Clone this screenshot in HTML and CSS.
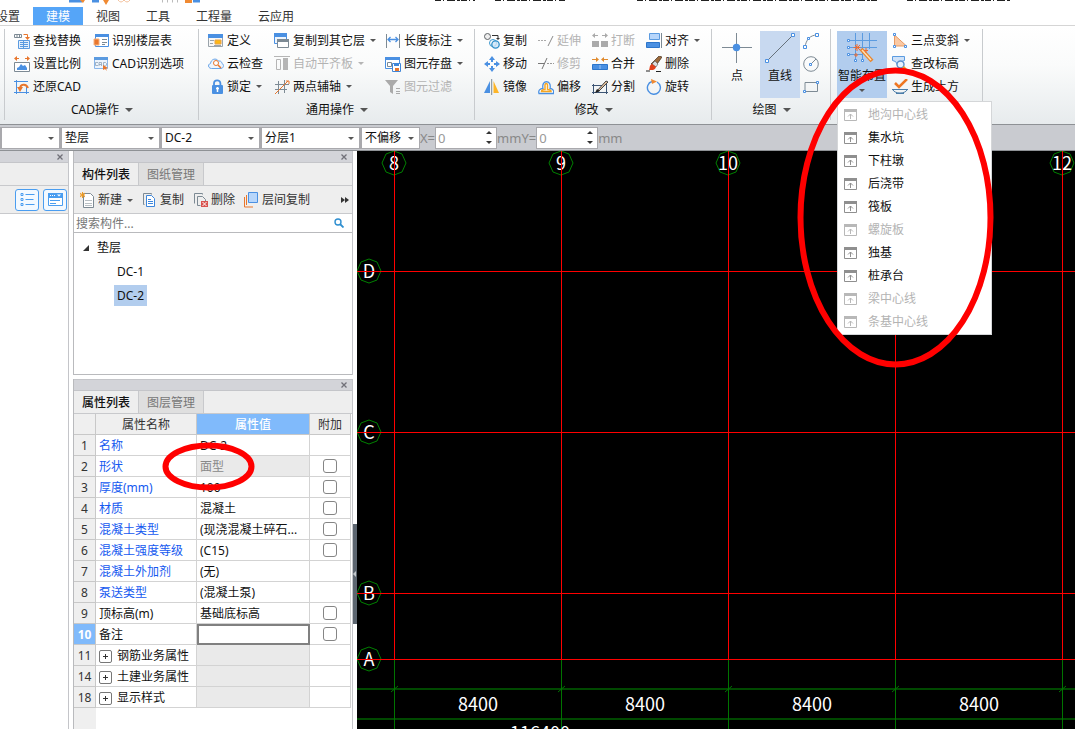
FILE: index.html
```html
<!DOCTYPE html>
<html lang="zh-CN">
<head>
<meta charset="utf-8">
<title>建模</title>
<link rel="stylesheet" href="styles.css">
</head>
<body>
<svg class="sprite" aria-hidden="true">
  <symbol id="find" viewBox="0 0 16 16"><path d="M.5 1.500h7v3h-7zM3 1.500v3M5.500 1.500v3" fill="none" stroke="#7d8a94"/><path d="M9.500 1.500h4v3" fill="none" stroke="#e8762d"/><path d="M11 4h5l-2.500 3z" fill="#e8762d"/><path d="M4.500 7.500h11v8h-11z" fill="#e4effb" stroke="#5b9be0"/><path d="M6 9.500h8M6 11.500h8M6 13.500h8M9.500 8v7" stroke="#5b9be0"/></symbol>
  <symbol id="scale" viewBox="0 0 16 16"><path d="M1 2.500h4M11 2.500h4" stroke="#e8762d"/><path d="M3 0v5L0 2.500zM13 0v5l3-2.500z" fill="#e8762d"/><path d="M.5 6.500h15v9H.5z" fill="#fff" stroke="#7d8a94"/><path d="M3 14v-2l2-1 2-3 2 2 2-1 2 3v2z" fill="#4a90e2"/></symbol>
  <symbol id="restore" viewBox="0 0 16 16"><path d="M2.500 1v14M12.500 6v9M0 2.500h14M0 13.500h15" stroke="#4a90e2" fill="none"/><path d="M6 10c0-5 6-6 8-1" stroke="#e8762d" stroke-width="2" fill="none"/><path d="M3 8h6l-3 5z" fill="#e8762d"/></symbol>
  <symbol id="floors" viewBox="0 0 16 16"><path d="M2.500 1.500h13v12h-13z" fill="#fff" stroke="#4a90e2"/><path d="M2 1h14v3H2z" fill="#4a90e2"/><path d="M9 6.500h5M9 9.500h5M9 11.500h3" stroke="#7d8a94"/><path d="M1 6h5v6H1z" fill="#e8762d" stroke="#f6b07d"/></symbol>
  <symbol id="cadopt" viewBox="0 0 16 16"><path d="M1.500 1.500h13v11h-13z" fill="#edf4fc" stroke="#8bb7ea"/><path d="M1 1h14v3H1z" fill="#5b9be0"/><path d="M5 6.500H2.500v3H5M6 10V6.500h2.500V10M6 8.500h2.500M10.500 6.500h2l1 1v1.500l-1 1h-2z" fill="none" stroke="#8ea3b8" stroke-width=".8"/><path d="M10 9l5 3-2 .5L14 15l-2-2-2 1z" fill="#e8762d"/></symbol>
  <symbol id="define" viewBox="0 0 16 16"><path d="M.5 1.500h14v12H.5z" fill="#f7f7f7" stroke="#9aa3aa"/><path d="M0 1h15v4H0z" fill="#4a90e2"/><path d="M2 7.500h4M2 10.500h3M6 12.500h7" stroke="#9aa3aa"/><path d="M7 7h6v4H7z" fill="#fdb813" stroke="#e8a24a"/></symbol>
  <symbol id="cloud" viewBox="0 0 16 16"><path d="M3.500 12.500C0 12.500-.5 8 2.500 7.500 3 3 8 1.500 10.500 5c3-.5 3.500 2 3.500 2.500 2.500 1 1.500 5-1 5z" fill="#eef5fd" stroke="#6aa5e8"/><circle cx="8" cy="7" r="2.500" fill="#fff" stroke="#e8762d"/><path d="M10 9l3 3" stroke="#e8762d" stroke-width="1.500"/></symbol>
  <symbol id="lock" viewBox="0 0 16 16"><path d="M6 7V4.500a3.200 3.200 0 0 1 6.400 0V7" fill="none" stroke="#4a90e2" stroke-width="1.800"/><rect x="4" y="6" width="11" height="9" rx="1" fill="#4a90e2"/><path d="M9.500 8v5M8 9.500h3" stroke="#fff" stroke-width="1.500"/></symbol>
  <symbol id="copyfloor" viewBox="0 0 16 16"><path d="M.5 .500h12v10H.5z" fill="#edf4fc" stroke="#4a90e2"/><path d="M0 0h13v4H0z" fill="#4a90e2"/><path d="M3.500 6.500h11v8h-11z" fill="#fff" stroke="#7d8a94"/><path d="M3 6h12v3H3z" fill="#7d8a94"/></symbol>
  <symbol id="align-slab" viewBox="0 0 16 16"><path d="M0 .5h16" stroke="#b5b5b5"/><path d="M2.500 3.500h4v10h-4z" fill="none" stroke="#b5b5b5"/><path d="M9 2h5v12H9z" fill="#b5b5b5"/></symbol>
  <symbol id="axis" viewBox="0 0 16 16"><path d="M4.500 2v13M10.500 1v13M1 5.500h14M1 10.500h12" stroke="#7d8a94"/><path d="M1 15L14 2" stroke="#e8762d"/><path d="M12 2h3v3" fill="none" stroke="#e8762d"/></symbol>
  <symbol id="length" viewBox="0 0 16 16"><path d="M1.500 1v14M14.500 1v14" stroke="#7d8a94"/><path d="M3 6.500h10M5.500 4L3 6.500 5.500 9M10.500 4L13 6.500 10.500 9" fill="none" stroke="#4a90e2" stroke-width="1.300"/></symbol>
  <symbol id="save" viewBox="0 0 16 16"><path d="M.5 1.500h14v11H.5z" fill="#fff" stroke="#4a90e2"/><path d="M0 1h15v3H0z" fill="#4a90e2"/><path d="M2.500 6.500h4v4h-4z" fill="none" stroke="#7d8a94"/><path d="M7.500 7.500h8v8h-8z" fill="#fff" stroke="#3f86d8"/><path d="M9 7h5v3H9z" fill="#3f86d8"/><path d="M10 12h4v3h-4z" fill="#e8762d"/></symbol>
  <symbol id="filter" viewBox="0 0 16 16"><path d="M0 1h13L8 7v8l-3-2V7z" fill="#aaa"/><path d="M11 9.500h4M11 12.500h4M11 14.500h4" stroke="#aaa"/></symbol>
  <symbol id="copy" viewBox="0 0 16 16"><circle cx="3.500" cy="3.500" r="3" fill="#eee" stroke="#5e6367"/><path d="M8 2.500h6v3" fill="none" stroke="#333"/><path d="M12 5h4l-2 2z" fill="#333"/><circle cx="9" cy="10" r="3.500" fill="#fff" stroke="#3c98cf"/><circle cx="11.500" cy="11.500" r="3.700" fill="#cfe6f7" fill-opacity=".8" stroke="#2f8fc9" stroke-width="1.300"/></symbol>
  <symbol id="move" viewBox="0 0 16 16"><path d="M8 3v3M8 10v3M3 8h3M10 8h3" stroke="#4a90e2" stroke-width="2"/><path d="M8 0l3 4H5zM8 16l3-4H5zM0 8l4-3v6zM16 8l-4-3v6z" fill="#4a90e2"/></symbol>
  <symbol id="mirror" viewBox="0 0 16 16"><path d="M6 2v12H0z" fill="#4a90e2"/><path d="M9.500 2v12H15z" fill="#fdb528"/><path d="M7.700 0v16" stroke="#7d8a94"/></symbol>
  <symbol id="extend" viewBox="0 0 16 16"><path d="M0 7.500h9" stroke="#aaa" stroke-dasharray="2 1"/><path d="M10 13l5-10" stroke="#8b8b8b"/></symbol>
  <symbol id="trim" viewBox="0 0 16 16"><path d="M0 7.500h6" stroke="#777"/><path d="M9 7.500h7" stroke="#999" stroke-dasharray="2 1"/><path d="M4 13L9 2" stroke="#777"/></symbol>
  <symbol id="offset" viewBox="0 0 16 16"><path d="M1 14.500h14.500c.8-3-1-5-3.500-5 2-9-9-9-7 0-3 0-5 2-4 5z" fill="#fff" stroke="#4a90e2" stroke-width="1.300"/><path d="M3.500 12.500h9.500c0-1.500-1-2-3.500-2V7C10 3.500 6.500 3.500 7 7v3.500c-2.500 0-3.500.5-3.500 2z" fill="none" stroke="#f5a623" stroke-width="1.500"/></symbol>
  <symbol id="break" viewBox="0 0 16 16"><path d="M1 2.500h5M10 2.500h5" stroke="#aaa"/><path d="M0 2.500L3 0v5zM16 2.500L13 0v5z" fill="#aaa"/><path d="M0 8h7v6H0zM9 8h7v6H9z" fill="#aaa"/></symbol>
  <symbol id="merge" viewBox="0 0 16 16"><path d="M0 3.500h5M11 3.500h5" stroke="#e08a2d"/><path d="M7 3.500L4 1v5zM9 3.500L12 1v5z" fill="#e08a2d"/><path d="M.5 8.500h15v5H.5z" fill="#4a90e2" stroke="#2d76cb"/><path d="M8 9v4" stroke="#9cc5f3"/></symbol>
  <symbol id="split" viewBox="0 0 16 16"><path d="M1.500 5v10M14.500 5v10M0 6.500h10M0 13.500h16" fill="none" stroke="#3d5574"/><path d="M4 13l10-11 2 1L7 12z" fill="#e6c29d" stroke="#444"/><path d="M3 14l2-4 3 2z" fill="#222"/></symbol>
  <symbol id="align" viewBox="0 0 16 16"><path d="M3.500.5h10v6h-10z" fill="#b7d6fb" stroke="#5b9be0"/><path d="M.5 9.500h13v5H.5z" fill="#4a90e2" stroke="#2d76cb"/><path d="M15.500 0v15" stroke="#7d8a94"/></symbol>
  <symbol id="brush" viewBox="0 0 16 16"><path d="M13 0l3 1-7 10-4-3z" fill="#9b6a3c" stroke="#46301e" stroke-width=".7"/><path d="M9 5l3 3-2 3-4-3z" fill="#ddd" stroke="#555" stroke-width=".6"/><path d="M6 8l4 3c-1 4-5 3-7 3 1-1 0-5 3-6z" fill="#e2401b"/><path d="M0 15h4M10 15.500h5" stroke="#222"/></symbol>
  <symbol id="rotate" viewBox="0 0 16 16"><path d="M6 2.500a6.500 6.500 0 1 0 5 .5" fill="none" stroke="#4a90e2" stroke-width="1.400"/><path d="M5 0l6 2.500L6 5z" fill="#f08a32"/></symbol>
  <symbol id="point" viewBox="0 0 30 30"><path d="M14.500 0v30M0 14.500h30" stroke="#7d8a94"/><circle cx="14.500" cy="14.500" r="3.700" fill="#4a90e2"/></symbol>
  <symbol id="line" viewBox="0 0 30 30"><path d="M2 28L28 2" stroke="#66717b"/><path d="M.5 26.500h3v3h-3zM26.500.5h3v3h-3z" fill="#fff" stroke="#4a90e2"/></symbol>
  <symbol id="arc" viewBox="0 0 16 16"><path d="M2 14C3 7 7 2 14 2" fill="none" stroke="#7d8a94"/><path d="M.5 12.500h3v3h-3zM12.500.5h3v3h-3zM4.500 4.500h2v2h-2z" fill="#fff" stroke="#4a90e2"/></symbol>
  <symbol id="circle" viewBox="0 0 16 16"><circle cx="8" cy="8" r="7.300" fill="none" stroke="#7d8a94"/><path d="M8 8l5-5" stroke="#7d8a94"/><path d="M6.500 7.500h2v2h-2z" fill="#fff" stroke="#4a90e2"/></symbol>
  <symbol id="rect" viewBox="0 0 16 16"><path d="M2 3.500h12.500v9H2z" fill="none" stroke="#7d8a94"/><path d="M.5 11.500h2v2h-2zM13.500 2.500h2v2h-2z" fill="#fff" stroke="#4a90e2"/></symbol>
  <symbol id="smart" viewBox="0 0 30 30"><path d="M8.500 0v28M15.500 0v28M22.500 0v16M1 7.500h29M1 14.500h29M1 21.500h14" stroke="#5b9be0" fill="none"/><path d="M.5 6.500h2v2h-2zM.5 13.500h2v2h-2zM.5 20.500h2v2h-2zM7.500 26.500h2v2h-2zM14.500 26.500h2v2h-2z" fill="#fff" stroke="#4a90e2"/><path d="M14 16l11 12" stroke="#e8862f" stroke-width="4"/><path d="M15 17l9 10" stroke="#ffe0b4" stroke-width="1.500"/><path d="M10 11v7M6.500 14.500h7M8 12l5 5M13 12l-5 5M19 15v5M17 17.500h4M9 20v4M7 22h4" stroke="#ee6b2f"/></symbol>
  <symbol id="slope" viewBox="0 0 16 16"><path d="M2.500 2v11h12z" fill="#fac9a4" stroke="#e79a64"/><path d="M1.500.5h2v2h-2zM1.500 12.500h2v2h-2zM12.500 12.500h2v2h-2z" fill="#fff" stroke="#4a90e2"/></symbol>
  <symbol id="level" viewBox="0 0 16 16"><path d="M.5.500h12v4l-3 1-3 5-3-5-3-1z" fill="#cfe2f8" stroke="#5b9be0"/><circle cx="8.500" cy="8.500" r="3.500" fill="#e7f2fd" stroke="#5b8fca" stroke-width="1.400"/><path d="M11 11l4 4" stroke="#f09a21" stroke-width="3"/></symbol>
  <symbol id="earth" viewBox="0 0 16 16"><path d="M3 4l4 4 8-8" fill="none" stroke="#ee7622" stroke-width="2.500"/><path d="M0 10.500h16M1 11c2 4 12 4 14 0M4 14.500h8" fill="none" stroke="#4a7ca8"/></symbol>
  <symbol id="win" viewBox="0 0 13 12"><path d="M.5.500h12v11H.5z" fill="#fff" stroke="currentColor"/><path d="M0 0h13v3H0z" fill="currentColor"/><path d="M6.500 5v5M4 7.500L6.500 5 9 7.500" fill="none" stroke="currentColor"/></symbol>
  <symbol id="x" viewBox="0 0 6 6"><path d="M.5.500l5 5M5.500.500l-5 5" stroke="#707078" stroke-width="1.300"/></symbol>
  <symbol id="list" viewBox="0 0 14 14"><path d="M.5.500h2v2h-2zM.5 5.500h2v2h-2zM.5 10.500h2v2h-2z" fill="none" stroke="#4a9df0"/><path d="M5 1.500h9M5 6.500h8M5 11.500h9" stroke="#4a9df0"/></symbol>
  <symbol id="card" viewBox="0 0 15 14"><path d="M.5.500h14v12H.5z" fill="#fff" stroke="#4a9df0"/><path d="M0 0h15v5H0z" fill="#4a9df0"/><path d="M2 2.500h5" stroke="#fff" stroke-dasharray="1 1"/><path d="M9 1.500h4l-2 2z" fill="#fff"/><path d="M2 7.500h10M2 10.500h6" stroke="#4a9df0"/></symbol>
  <symbol id="new" viewBox="0 0 16 16"><path d="M3.500 1.500h7l3 3v11h-10z" fill="#fff" stroke="#7d8a94"/><path d="M5 8.500h7M5 11.500h7M5 13.500h7" stroke="#b9bfc4"/><path d="M0 1l5 4M5 1L0 5M2.500 0v6M0 3h5" stroke="#f09a21"/></symbol>
  <symbol id="pages" viewBox="0 0 16 16"><path d="M2.500 12.500h-1v-11h8v1" fill="none" stroke="#7d8a94"/><path d="M4.500 3.500h5l3 3v8h-8z" fill="#fff" stroke="#3d86dc"/><path d="M6 7.500h3M6 9.500h5M6 11.500h5" stroke="#3d86dc"/></symbol>
  <symbol id="remove" viewBox="0 0 16 16"><path d="M1.500 11.500v-10h8v1M4.500 13.500v-9h5l3 3v2M4.500 13.500h3" fill="none" stroke="#7d8a94"/><path d="M8 9h7v6H8z" fill="#d9534f"/><path d="M9.500 10l4 4M13.500 10l-4 4" stroke="#fff"/></symbol>
  <symbol id="layers" viewBox="0 0 16 16"><path d="M.5 5v10H9M2.500 3v10" fill="none" stroke="#e8762d"/><path d="M4.500.500h9v10h-9z" fill="#b7d6fb" stroke="#4a90e2"/></symbol>
  <symbol id="search" viewBox="0 0 10 10"><circle cx="4" cy="4" r="3" fill="none" stroke="#2f8fd0" stroke-width="1.400"/><path d="M6 6l3.500 3.500" stroke="#2f8fd0" stroke-width="1.800"/></symbol>
  <symbol id="bubble" viewBox="-13 -13 26 26"><path d="M0-12L8-9 12 0 8 9 0 12-8 9-12 0-8-9z" fill="none" stroke="#008000"/></symbol>
</svg>

<div class="app">
  <header class="titlebar">
    <svg class="title-art" aria-hidden="true">
      <path d="M69 1h13M92 1h7M193 1h7" stroke="#4a90e2" stroke-width="3"/>
      <path d="M80 0h5l-2 3zM103 0h6l-3 5zM185 0h7v3h-7z" fill="#f08a32"/>
      <path d="M118 0q3 4 6 0M124 0q3 4 6 0" fill="none" stroke="#f4c3a0"/>
      <path d="M162 1h16" stroke="#bbb" stroke-width="3" stroke-dasharray="1 4"/>
      <path d="M435 .5h40M495 .5h70M637 .5h240M907 .5h103" stroke="#222" stroke-dasharray="6 2 1 3 8 2 3 1"/>
    </svg>
  </header>
  <nav class="tabs">
    <button>设置</button><button class="on">建模</button><button>视图</button><button>工具</button><button>工程量</button><button>云应用</button>
  </nav>

  <section class="ribbon">
    <div class="group edge"></div>
    <div class="group g-cad">
      <div class="tools">
        <button><svg><use href="#find"/></svg>查找替换</button><button><svg><use href="#floors"/></svg>识别楼层表</button>
        <button><svg><use href="#scale"/></svg>设置比例</button><button><svg><use href="#cadopt"/></svg>CAD识别选项</button>
        <button><svg><use href="#restore"/></svg>还原CAD</button>
      </div>
      <button class="caption">CAD操作<i class="caret wide"></i></button>
    </div>
    <div class="group g-common">
      <div class="tools">
        <button><svg><use href="#define"/></svg>定义</button><button><svg><use href="#copyfloor"/></svg>复制到其它层<i class="caret"></i></button><button><svg><use href="#length"/></svg>长度标注<i class="caret"></i></button>
        <button><svg><use href="#cloud"/></svg>云检查</button><button disabled><svg><use href="#align-slab"/></svg>自动平齐板<i class="caret"></i></button><button><svg><use href="#save"/></svg>图元存盘<i class="caret"></i></button>
        <button><svg><use href="#lock"/></svg>锁定<i class="caret"></i></button><button><svg><use href="#axis"/></svg>两点辅轴<i class="caret"></i></button><button disabled><svg><use href="#filter"/></svg>图元过滤</button>
      </div>
      <button class="caption">通用操作<i class="caret wide"></i></button>
    </div>
    <div class="group g-modify">
      <div class="tools">
        <button><svg><use href="#copy"/></svg>复制</button><button disabled><svg><use href="#extend"/></svg>延伸</button><button disabled><svg><use href="#break"/></svg>打断</button><button><svg><use href="#align"/></svg>对齐<i class="caret"></i></button>
        <button><svg><use href="#move"/></svg>移动</button><button disabled><svg><use href="#trim"/></svg>修剪</button><button><svg><use href="#merge"/></svg>合并</button><button><svg><use href="#brush"/></svg>删除</button>
        <button><svg><use href="#mirror"/></svg>镜像</button><button><svg><use href="#offset"/></svg>偏移</button><button><svg><use href="#split"/></svg>分割</button><button><svg><use href="#rotate"/></svg>旋转</button>
      </div>
      <button class="caption">修改<i class="caret wide"></i></button>
    </div>
    <div class="group g-draw">
      <div class="bigs">
        <button class="big"><svg><use href="#point"/></svg>点</button>
        <button class="big on"><svg><use href="#line"/></svg>直线</button>
        <div class="tools">
          <button aria-label="弧"><svg><use href="#arc"/></svg></button>
          <button aria-label="圆"><svg><use href="#circle"/></svg></button>
          <button aria-label="矩形"><svg><use href="#rect"/></svg></button>
        </div>
      </div>
      <button class="caption">绘图<i class="caret wide"></i></button>
    </div>
    <div class="group g-smart">
      <div class="bigs">
        <div class="drop">
          <button class="big open"><svg><use href="#smart"/></svg>智能布置<i class="caret"></i></button>
          <div class="menu">
            <button disabled><svg><use href="#win"/></svg>地沟中心线</button>
            <button><svg><use href="#win"/></svg>集水坑</button>
            <button><svg><use href="#win"/></svg>下柱墩</button>
            <button><svg><use href="#win"/></svg>后浇带</button>
            <button><svg><use href="#win"/></svg>筏板</button>
            <button disabled><svg><use href="#win"/></svg>螺旋板</button>
            <button><svg><use href="#win"/></svg>独基</button>
            <button><svg><use href="#win"/></svg>桩承台</button>
            <button disabled><svg><use href="#win"/></svg>梁中心线</button>
            <button disabled><svg><use href="#win"/></svg>条基中心线</button>
          </div>
        </div>
        <div class="tools">
          <button><svg><use href="#slope"/></svg>三点变斜<i class="caret"></i></button>
          <button><svg><use href="#level"/></svg>查改标高</button>
          <button><svg><use href="#earth"/></svg>生成土方</button>
        </div>
      </div>
    </div>
  </section>

  <section class="options">
    <span class="pick narrow"><select aria-label="楼层"><option></option></select></span>
    <span class="pick"><select aria-label="构件类型"><option>垫层</option></select></span>
    <span class="pick"><select aria-label="构件"><option>DC-2</option></select></span>
    <span class="pick"><select aria-label="分层"><option>分层1</option></select></span>
    <span class="pick narrow"><select aria-label="偏移"><option>不偏移</option></select></span>
    <label for="ox">X=</label><span class="spin"><input id="ox" value="0" disabled><i></i><i></i></span><span class="unit">mm</span>
    <label for="oy">Y=</label><span class="spin"><input id="oy" value="0" disabled><i></i><i></i></span><span class="unit">mm</span>
  </section>

  <main class="work">
    <aside class="panel side">
      <div class="bar"><button aria-label="关闭"><svg><use href="#x"/></svg></button></div>
      <div class="ptabs"></div>
      <div class="ptools views">
        <button aria-label="列表"><svg><use href="#list"/></svg></button>
        <button aria-label="卡片"><svg><use href="#card"/></svg></button>
      </div>
    </aside>
    <div class="stack">
      <section class="panel parts">
        <div class="bar"><button aria-label="关闭"><svg><use href="#x"/></svg></button></div>
        <div class="ptabs"><button class="on">构件列表</button><button>图纸管理</button></div>
        <div class="ptools">
          <button><svg><use href="#new"/></svg>新建<i class="caret"></i></button>
          <button><svg><use href="#pages"/></svg>复制</button>
          <button><svg><use href="#remove"/></svg>删除</button>
          <button><svg><use href="#layers"/></svg>层间复制</button>
          <button class="more" aria-label="更多"><i></i><i></i></button>
        </div>
        <div class="find"><input aria-label="搜索构件" placeholder="搜索构件..."><svg><use href="#search"/></svg></div>
        <ul class="tree">
          <li><span class="node"><svg viewBox="0 0 6 6"><path d="M6 0v6H0z" fill="#333"/></svg>垫层</span>
            <ul><li><span>DC-1</span></li><li><span class="sel">DC-2</span></li></ul>
          </li>
        </ul>
      </section>
      <section class="panel props">
        <div class="bar"><button aria-label="关闭"><svg><use href="#x"/></svg></button></div>
        <div class="ptabs"><button class="on">属性列表</button><button>图层管理</button></div>
        <table>
          <colgroup><col class="c-no"><col class="c-name"><col class="c-val"><col class="c-add"></colgroup>
          <thead><tr><th></th><th>属性名称</th><th class="hot">属性值</th><th>附加</th></tr></thead>
          <tbody>
            <tr><th>1</th><td class="key">名称</td><td>DC-2</td><td></td></tr>
            <tr><th>2</th><td class="key">形状</td><td class="off">面型</td><td><input type="checkbox" aria-label="形状附加"></td></tr>
            <tr><th>3</th><td class="key">厚度(mm)</td><td>100</td><td><input type="checkbox" aria-label="厚度附加"></td></tr>
            <tr><th>4</th><td class="key">材质</td><td>混凝土</td><td><input type="checkbox" aria-label="材质附加"></td></tr>
            <tr><th>5</th><td class="key">混凝土类型</td><td>(现浇混凝土碎石...</td><td><input type="checkbox" aria-label="混凝土类型附加"></td></tr>
            <tr><th>6</th><td class="key">混凝土强度等级</td><td>(C15)</td><td><input type="checkbox" aria-label="混凝土强度等级附加"></td></tr>
            <tr><th>7</th><td class="key">混凝土外加剂</td><td>(无)</td><td></td></tr>
            <tr><th>8</th><td class="key">泵送类型</td><td>(混凝土泵)</td><td></td></tr>
            <tr><th>9</th><td>顶标高(m)</td><td>基础底标高</td><td><input type="checkbox" aria-label="顶标高附加"></td></tr>
            <tr><th class="hot">10</th><td>备注</td><td class="edit"></td><td><input type="checkbox" aria-label="备注附加"></td></tr>
            <tr><th>11</th><td><button class="plus" aria-label="展开"></button>钢筋业务属性</td><td class="off"></td><td></td></tr>
            <tr><th>14</th><td><button class="plus" aria-label="展开"></button>土建业务属性</td><td class="off"></td><td></td></tr>
            <tr><th>18</th><td><button class="plus" aria-label="展开"></button>显示样式</td><td class="off"></td><td></td></tr>
          </tbody>
        </table>
      </section>
    </div>
    <div class="splitter"><button aria-label="收起面板"></button></div>
    <svg class="canvas" role="img" aria-label="轴网">
      <g class="dims"><path d="M0 538h3000M0 568h3000"/></g>
      <g class="drops"><path d="M37.500 508v800M204.500 508v800M371.500 508v800M538.500 508v800M705.500 508v800"/><path d="M34 541l7-6M201 541l7-6M368 541l7-6M535 541l7-6M702 541l7-6"/></g>
      <g>
        <use href="#bubble" x="24" y="-1" width="26" height="26"/><use href="#bubble" x="191" y="-1" width="26" height="26"/><use href="#bubble" x="358" y="-1" width="26" height="26"/><use href="#bubble" x="692" y="-1" width="26" height="26"/>
        <use href="#bubble" x="-1" y="107" width="26" height="26"/><use href="#bubble" x="-1" y="268" width="26" height="26"/><use href="#bubble" x="-1" y="429" width="26" height="26"/><use href="#bubble" x="-1" y="495" width="26" height="26"/>
      </g>
      <g class="labels">
        <text x="37" y="19">8</text><text x="204" y="19">9</text><text x="371" y="19">10</text><text x="705" y="19">12</text>
        <text x="12" y="127">D</text><text x="12" y="288">C</text><text x="12" y="449">B</text><text x="12" y="515">A</text>
        <text x="121" y="560">8400</text><text x="288" y="560">8400</text><text x="455" y="560">8400</text><text x="622" y="560">8400</text>
        <text x="183" y="589">116400</text>
      </g>
      <g class="axes">
        <rect x="37" y="0" width="1" height="508"/><rect x="204" y="0" width="1" height="508"/><rect x="371" y="0" width="1" height="508"/><rect x="538" y="0" width="1" height="508"/><rect x="705" y="0" width="1" height="508"/>
        <rect x="0" y="120" width="100%" height="1"/><rect x="0" y="281" width="100%" height="1"/><rect x="0" y="442" width="100%" height="1"/><rect x="0" y="508" width="100%" height="1"/>
      </g>
    </svg>
  </main>
  <svg class="marks" aria-hidden="true"><ellipse cx="895.500" cy="217.500" rx="95" ry="147"/><ellipse cx="208.500" cy="466.500" rx="43" ry="21"/></svg>
</div>
</body>
</html>
```
FILE: styles.css
```css
* { box-sizing: border-box; }
body, button, input, select { font: 12px/16px "Noto Sans", "Noto Sans CJK SC", sans-serif; color: #111; }
body { margin: 0; background: #fff; }
button { display: flex; align-items: center; padding: 0; border: 0; background: none; white-space: nowrap; }
svg { flex: none; }
.sprite { position: absolute; width: 0; height: 0; }
.app { position: relative; display: flex; flex-direction: column; height: 100vh; overflow: hidden; }
.marks { position: absolute; inset: 0; width: 100%; height: 100%; pointer-events: none; z-index: 5; }
.marks ellipse { fill: none; stroke: #f00; stroke-width: 6; }

.titlebar { height: 7px; flex: none; }
.title-art { display: block; width: 100%; height: 7px; }
.tabs { display: flex; flex: none; height: 19px; margin-left: -17px; border-bottom: 1px solid #d5d5d5; }
.tabs button { padding: 1px 13px 0; color: #333; }
.tabs .on { background: #55a5f8; color: #fff; }

.caret { flex: none; width: 0; height: 0; margin-left: 5px; border: 3px solid transparent; border-top-color: #555; border-bottom: 0; }
.caret.wide { border-width: 4px 4px 0; margin-left: 6px; }
button:disabled .caret { border-top-color: #b5b5b5; }

.ribbon { display: flex; flex: none; height: 98px; background: linear-gradient(#fff, #fafbfb 40%, #e7ebed); }
.group { display: flex; flex-direction: column; padding-top: 3px; position: relative; }
.group::after { content: ""; position: absolute; right: 0; top: 3px; bottom: 4px; width: 1px; background: #c8cbce; }
.edge { width: 5px; }
.tools { display: grid; grid-auto-rows: 23px; }
.tools button { gap: 3px; }
.tools .caret { margin-left: 2px; }
.tools svg { width: 16px; height: 16px; }
.tools button:disabled { color: #b3b3b3; }
.caption { height: 24px; justify-content: center; }
.g-cad { width: 194px; }
.g-cad .tools { grid-template-columns: 79px 1fr; padding-left: 9px; }
.g-common { width: 276px; }
.g-common .tools { grid-template-columns: 66px 111px 1fr; padding-left: 9px; }
.g-modify { width: 237px; }
.g-modify .tools { grid-template-columns: 54px 54px 54px 1fr; padding-left: 9px; }
.g-draw { width: 119px; }
.g-smart { width: 152px; }
.bigs { display: flex; height: 69px; }
.big { flex-direction: column; height: 67px; margin-top: 2px; padding-top: 2px; }
.big svg { width: 30px; height: 30px; margin-bottom: 5px; }
.big .caret { margin: 5px 0 0; }
.g-draw .big { width: 40px; }
.g-draw .bigs { padding-left: 5px; gap: 3px; }
.g-draw .big.on { background: #c8d9f0; }
.g-smart .bigs { padding-left: 6px; gap: 5px; }
.drop { position: relative; }
.big.open { width: 50px; background: #b2cdee; }
.menu { position: absolute; left: 0; top: 72px; z-index: 3; width: 155px; padding: 1px 0; background: #fff; border: 1px solid #d4d6d8; }
.menu button { width: 100%; height: 23px; padding-left: 6px; gap: 11px; color: #111; }
.menu svg { width: 13px; height: 12px; color: #8f8f8f; }
.menu button:disabled { color: #b3b3b3; }
.menu button:disabled svg { color: #b8b8b8; }

.options { display: flex; align-items: center; flex: none; height: 27px; background: #c9cbd0; border: solid #8e9195; border-width: 1px 0; color: #888; font-size: 13px; }
.pick { position: relative; flex: none; width: 100px; }
.pick.narrow { width: 60px; }
.pick select { display: block; width: 100%; height: 22px; padding: 0 3px; appearance: none; background: #fff; border: 1px solid #a9a9ad; border-left-width: 2px; border-radius: 0; }
.pick::after { content: ""; position: absolute; right: 6px; top: 10px; border: 3px solid transparent; border-top-color: #555; border-bottom: 0; }
.spin { display: grid; grid-template: 1fr 1fr / 1fr 14px; width: 62px; height: 22px; background: #fff; border: 1px solid #a9a9ad; }
.spin input { grid-row: 1 / 3; min-width: 0; width: 100%; padding: 0 2px; border: 0; background: none; color: #999; font-size: 13px; }
.spin i { align-self: center; justify-self: center; border: 3px solid transparent; border-bottom-color: #333; border-top: 0; }
.spin i + i { border-top: 3px solid #333; border-bottom: 0; }

.work { display: flex; flex: 1; min-height: 0; }
.panel { display: flex; flex-direction: column; border-right: 1px solid #c4c5c9; background: #fff; }
.side { width: 69px; flex: none; }
.stack { display: flex; flex-direction: column; flex: none; gap: 4px; width: 280px; margin-left: 4px; }
.stack .panel { border-left: 1px solid #b9babd; }
.bar { display: flex; justify-content: flex-end; flex: none; height: 12px; padding-right: 5px; background: #d3d4d9; border-bottom: 1px solid #c4c5c9; }
.bar svg { width: 6px; height: 6px; }
.ptabs { display: flex; flex: none; height: 23px; background: #eee; border-bottom: 1px solid #c8c9cc; }
.ptabs button { padding: 2px 8px 0; background: #dfdfdf; border-right: 1px solid #c8c9cc; color: #777; }
.ptabs .on { background: #eee; color: #111; font-weight: 500; }
.ptools { display: flex; align-items: center; flex: none; height: 28px; gap: 9px; padding: 1px 0 0 6px; background: #eee; border-bottom: 1px solid #c8c9cc; }
.ptools button { gap: 2px; color: #333; }
.ptools svg { width: 16px; height: 16px; }
.ptools .caret { margin-left: 3px; }
.ptools.views { justify-content: flex-end; gap: 4px; padding: 0 1px 0 0; }
.views button { width: 24px; height: 22px; justify-content: center; border: 1px solid #4a9df0; border-radius: 3px; background: #f3f9ff; }
.views svg { width: 15px; height: 14px; }
.ptools .more { gap: 0; margin: 0 3px 0 auto; }
.more i { border: 3px solid transparent; border-left: 4px solid #333; border-right: 0; }
.find { display: flex; align-items: center; flex: none; height: 19px; padding-right: 8px; border-bottom: 1px solid #b9babd; }
.find input { flex: 1; min-width: 0; padding: 1px 2px 0; border: 0; background: none; }
.find input::placeholder { color: #777; }
.find svg { width: 10px; height: 10px; }
.tree, .tree ul { margin: 0; padding: 0; list-style: none; }
.tree { min-height: 142px; padding: 2px 0 0 9px; border-bottom: 1px solid #b9babd; }
.tree li { line-height: 24px; }
.tree ul { padding-left: 31px; }
.tree span { display: inline-block; padding: 0 3px; line-height: 21px; }
.tree .node { display: inline-flex; align-items: center; gap: 8px; padding: 0; line-height: 24px; }
.node svg { width: 6px; height: 6px; }
.tree .sel { background: #b2cdee; }
.props { flex: 1; min-height: 0; background: linear-gradient(90deg, #efefef 22px, #fff 22px); }
.props .bar { border-top: 1px solid #c4c5c9; }
table { width: 277px; table-layout: fixed; border-spacing: 0; background: #fff; }
.c-no { width: 22px; }
.c-name { width: 101px; }
.c-add { width: 41px; }
th, td { height: 21px; padding: 2px 3px 0; border: solid #d3d3d3; border-width: 0 1px 1px 0; text-align: left; white-space: nowrap; overflow: hidden; }
th { padding: 2px 0 0; background: #efefef; border-color: #c8c8c8; color: #333; font-weight: 400; text-align: center; }
th.hot { background: #80bafb; color: #fff; font-weight: 500; }
tbody th.hot { font-weight: 700; }
td:last-child { padding: 0 3px; text-align: center; }
.key { color: #1559f0; }
.off { background: #eaeaea; color: #888; }
.edit { border: 2px solid #808080; }
td input { display: block; width: 14px; height: 14px; margin: 0 auto; appearance: none; background: #fff; border: 1px solid #858585; border-radius: 3px; }
.plus { display: inline-block; width: 13px; height: 13px; margin-right: 5px; vertical-align: -2px; border: 1px solid #777; border-radius: 2px; background: linear-gradient(#333, #333) 50% / 5px 1px no-repeat, linear-gradient(#333, #333) 50% / 1px 5px no-repeat, #fff; }
.splitter { display: flex; align-items: flex-end; flex: none; width: 4px; padding-bottom: 105px; background: #fff; }
.splitter button { width: 4px; height: 100px; background: #5d6670; }
.splitter button::after { content: ""; border: 3px solid transparent; border-right: 3px solid #c5c9cd; border-left: 0; }
.canvas { flex: 1; min-width: 0; height: 100%; background: #000; }
.canvas path { fill: none; }
.dims { stroke: #004800; stroke-width: 2; }
.drops { stroke: #007400; }
.axes { fill: #f00; }
.labels { fill: #fff; font: 18px "Noto Sans CJK SC", sans-serif; text-anchor: middle; }
```
